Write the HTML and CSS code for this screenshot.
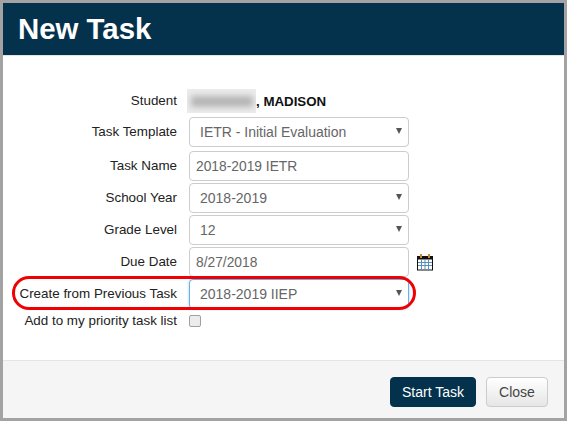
FILE: index.html
```html
<!DOCTYPE html>
<html lang="en">
<head>
<meta charset="utf-8">
<title>New Task</title>
<link rel="stylesheet" href="styles.css">
</head>
<body>
<div class="dialog">
  <header class="head"><h1>New Task</h1></header>
  <main class="body">
    <form class="form">
      <div class="row student-row">
        <label class="lbl">Student</label>
        <div class="student"><span class="blur"><i></i></span><b>, MADISON</b></div>
      </div>
      <div class="row">
        <label class="lbl">Task Template</label>
        <div class="sel"><select><option>IETR - Initial Evaluation</option></select></div>
      </div>
      <div class="row name-row">
        <label class="lbl">Task Name</label>
        <input class="txt" type="text" value="2018-2019 IETR">
      </div>
      <div class="row">
        <label class="lbl">School Year</label>
        <div class="sel"><select><option>2018-2019</option></select></div>
      </div>
      <div class="row">
        <label class="lbl">Grade Level</label>
        <div class="sel"><select><option>12</option></select></div>
      </div>
      <div class="row">
        <label class="lbl">Due Date</label>
        <input class="txt" type="text" value="8/27/2018">
        <svg class="cal" width="18" height="18" viewBox="0 0 18 18" aria-hidden="true">
          <rect x="1.500" y="3.500" width="15" height="13.500" fill="#fff" stroke="#111" stroke-width="1"/>
          <rect x="1" y="3" width="16" height="3.500" fill="#111"/>
          <path d="M2 9.500h14M2 12.500h14M5.500 7v10M9 7v10M12.500 7v10" stroke="#5d8fbe" stroke-width="1" fill="none"/>
          <rect x="4" y="1" width="2" height="4" fill="#c98a3a"/>
          <rect x="12" y="1" width="2" height="4" fill="#c98a3a"/>
        </svg>
      </div>
      <div class="row focus-row">
        <label class="lbl">Create from Previous Task</label>
        <div class="sel focus"><select><option>2018-2019 IIEP</option></select></div>
        <span class="ring"></span>
      </div>
      <div class="row check-row">
        <label class="lbl">Add to my priority task list</label>
        <span class="check"></span>
      </div>
    </form>
  </main>
  <footer class="foot">
    <button class="btn primary" type="button">Start Task</button>
    <button class="btn plain" type="button">Close</button>
  </footer>
</div>
</body>
</html>
```
FILE: styles.css
```css
* { box-sizing: border-box; }
html, body { margin: 0; height: 100%; }
body {
  background: #a3a3a3;
  padding: 3px;
  font-family: "Liberation Sans", Arial, sans-serif;
  overflow: hidden;
}
.dialog {
  height: 415px;
  background: #fff;
  display: flex;
  flex-direction: column;
}
.head {
  height: 53px;
  background: #04324c;
  border-bottom: 1px solid #e5e5e5;
  padding: 0 15px;
  display: flex;
  align-items: center;
}
.head h1 {
  margin: 0;
  color: #fff;
  font-size: 29.400px;
  font-weight: 700;
  line-height: 30px;
}
.body { flex: 1; padding: 33px 0 0; }
.form { display: flex; flex-direction: column; gap: 2px; }
.row {
  position: relative;
  display: flex;
  align-items: center;
  height: 30px;
}
.student-row { height: 24px; margin-bottom: 2px; }
.name-row { margin-top: 2px; }
.lbl {
  width: 174px;
  text-align: right;
  color: #222;
  font-size: 13.400px;
  line-height: 20px;
  flex: none;
}
.student {
  margin-left: 10px;
  display: flex;
  align-items: center;
  font-size: 13.300px;
  color: #111;
}
.blur {
  width: 69px;
  height: 24px;
  background: #ececec;
  display: flex;
  align-items: center;
  justify-content: center;
  overflow: hidden;
}
.blur i {
  display: block;
  width: 62px;
  height: 11px;
  background: #b4b4b4;
  filter: blur(3px);
}
.sel {
  position: relative;
  margin-left: 12px;
  width: 220px;
  height: 30px;
}
.sel::after {
  content: "";
  position: absolute;
  right: 7px;
  top: 11px;
  border-left: 3px solid transparent;
  border-right: 3px solid transparent;
  border-top: 6px solid #555;
  pointer-events: none;
}
.sel select {
  appearance: none;
  -webkit-appearance: none;
  width: 100%;
  height: 30px;
  padding: 0 20px 0 10px;
  border: 1px solid #ccc;
  border-radius: 4px;
  background: #fff;
  color: #666;
  font: 14px "Liberation Sans", Arial, sans-serif;
}
.focus select {
  border-color: #66afe9;
  box-shadow: 0 0 3px rgba(102, 175, 233, .6);
}
.txt {
  margin-left: 12px;
  width: 220px;
  height: 30px;
  padding: 0 6px;
  border: 1px solid #ccc;
  border-radius: 4px;
  color: #666;
  font: 13.800px "Liberation Sans", Arial, sans-serif;
}
.cal { margin-left: 7px; flex: none; }
.ring {
  position: absolute;
  left: 9px;
  top: -3px;
  width: 404px;
  height: 34px;
  border: 3px solid #f00000;
  border-radius: 17px;
  pointer-events: none;
}
.check-row { margin-top: -2px; height: 24px; }
.check {
  margin-left: 12px;
  width: 12px;
  height: 12px;
  background: #ececec;
  border: 1px solid #a0a0a0;
  border-radius: 2px;
}
.foot {
  height: 58px;
  background: #f5f5f5;
  border-top: 1px solid #e5e5e5;
  padding: 16px 16px 0 0;
  display: flex;
  justify-content: flex-end;
  align-items: flex-start;
  gap: 10px;
}
.btn {
  height: 30px;
  border-radius: 4px;
  font: 14px "Liberation Sans", Arial, sans-serif;
  padding: 0;
}
.primary {
  background: #04324c;
  border: 1px solid #04324c;
  color: #fff;
  width: 86px;
}
.plain {
  background: linear-gradient(#fff, #e6e6e6);
  border: 1px solid #ccc;
  color: #444;
  width: 62px;
}
```
